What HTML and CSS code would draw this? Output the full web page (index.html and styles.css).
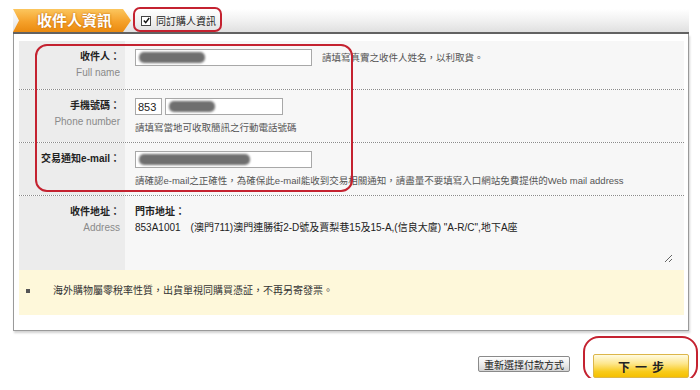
FILE: index.html
```html
<!DOCTYPE html>
<html lang="zh-Hant">
<head>
  <meta charset="UTF-8" />
  <title>收件人資訊</title>
  <link rel="stylesheet" href="styles.css">
</head>
<body>
  <div class="page">
    <div class="tabbar">
      <div class="tab">收件人資訊</div>
      <label class="same">
        <span class="chk"><svg width="7" height="7" viewBox="0 0 7 7"><path d="M0.8 3.6 L2.7 5.6 L6.2 1" fill="none" stroke="#111" stroke-width="1.4"/></svg></span>
        同訂購人資訊
      </label>
    </div>

    <div class="panel">
      <div class="row">
        <div class="lbl"><b>收件人：</b><span class="en">Full name</span></div>
        <div class="val">
          <div class="line">
            <span class="field w-long"><i class="blot" style="width:66px"></i></span>
            <span class="hint side">請填寫真實之收件人姓名，以利取貨。</span>
          </div>
        </div>
      </div>

      <div class="row">
        <div class="lbl"><b>手機號碼：</b><span class="en">Phone number</span></div>
        <div class="val">
          <div class="line">
            <span class="field w-code">853</span>
            <span class="field w-phone"><i class="blot" style="width:46px"></i></span>
          </div>
          <div class="hint">請填寫當地可收取簡訊之行動電話號碼</div>
        </div>
      </div>

      <div class="row">
        <div class="lbl"><b>交易通知e-mail：</b></div>
        <div class="val">
          <div class="line">
            <span class="field w-long"><i class="blot" style="width:111px"></i></span>
          </div>
          <div class="hint">請確認e-mail之正確性，為確保此e-mail能收到交易相關通知，請盡量不要填寫入口網站免費提供的Web mail address</div>
        </div>
      </div>

      <div class="row last">
        <div class="lbl"><b>收件地址：</b><span class="en">Address</span></div>
        <div class="val">
          <b class="store">門市地址：</b>
          <textarea class="addr" readonly>853A1001　(澳門711)澳門連勝街2-D號及賈梨巷15及15-A,(信良大廈) "A-R/C",地下A座</textarea>
        </div>
      </div>

      <div class="note"><span class="dot"></span>海外購物屬零稅率性質，出貨單視同購買憑証，不再另寄發票。</div>
    </div>

    <div class="actions">
      <button class="btn-back">重新選擇付款方式</button>
      <button class="btn-next">下一步</button>
    </div>

    <div class="mark mark-same"></div>
    <div class="mark mark-rows"></div>
    <div class="mark mark-next"></div>
  </div>
</body>
</html>
```

FILE: styles.css
```css
body {
  margin: 0;
  background: #fff;
  font-family: "Liberation Sans", "Noto Sans CJK TC", sans-serif;
  font-size: 10px;
  color: #333;
}
.page {
  position: relative;
  width: 676px;
  padding: 9px 11px 0 13px;
}
.tabbar {
  display: flex;
  align-items: center;
  height: 23px;
  background: linear-gradient(#ffffff, #f1f1f1 50%, #e0e0e0);
  border-bottom: 2px solid #626262;
}
.tab {
  align-self: stretch;
  width: 94px;
  padding-left: 24px;
  line-height: 23px;
  font-size: 15px;
  font-weight: bold;
  color: #fff;
  text-shadow: 0 0 2px #b45a00;
  background: linear-gradient(#fbc65e, #f5a12a 55%, #ea8a10);
  clip-path: polygon(0 0, 110px 0, 118px 50%, 110px 100%, 0 100%, 6px 50%);
}
.same {
  display: flex;
  align-items: center;
  gap: 5px;
  margin-left: 10px;
  color: #222;
}
.chk {
  display: flex;
  align-items: center;
  justify-content: center;
  width: 8px;
  height: 8px;
  border: 1px solid #444;
  background: #fff;
}

.panel {
  width: 665px;
  padding: 7px 4px 15px 5px;
  border: 1px solid #9a9a9a;
  border-top: none;
  box-shadow: 1px 2px 2px rgba(0,0,0,0.18);
  background: #fff;
}
.row {
  display: grid;
  grid-template-columns: 106px 1fr;
  border-bottom: 1px dotted #8a8a8a;
}
.row.last { border-bottom: none; }
.lbl {
  display: flex;
  flex-direction: column;
  align-items: flex-end;
  padding: 8px 5px 8px 0;
  background: #ececec;
  line-height: 16px;
  color: #222;
}
.lbl b { font-weight: bold; }
.lbl .en { color: #8a8a8a; }
.val {
  padding: 8px 0 7px 10px;
  background: #f7f7f7;
}
.line {
  display: flex;
  align-items: center;
  gap: 3px;
}
.field {
  display: flex;
  align-items: center;
  box-sizing: border-box;
  height: 17px;
  padding-left: 3px;
  border: 1px solid #a8a8a8;
  background: #fff;
  color: #222;
}
.w-long { width: 177px; }
.w-code { width: 27px; padding-left: 2px; font-size: 11px; }
.w-phone { width: 118px; }
.blot {
  display: block;
  height: 11px;
  border-radius: 5px;
  background: #6f6f6f;
  filter: blur(0.8px);
}
.hint {
  margin-top: 6px;
  line-height: 14px;
  font-size: 9.5px;
  color: #555;
}
.hint.side { margin: 0 0 0 7px; }
.store {
  display: block;
  line-height: 16px;
  color: #222;
}
.addr {
  display: block;
  box-sizing: border-box;
  width: 538px;
  height: 42px;
  margin: 1px 0 0 0;
  padding: 0;
  border: none;
  background: transparent;
  font-family: inherit;
  font-size: 10px;
  line-height: 14px;
  color: #222;
}
.note {
  display: flex;
  align-items: center;
  padding: 14px 0 17px 7px;
  line-height: 14px;
  background: #fef8da;
  color: #333;
}
.dot {
  width: 4px;
  height: 4px;
  margin-right: 23px;
  background: #555;
}

.actions {
  display: flex;
  justify-content: flex-end;
  align-items: center;
  gap: 23px;
  margin-top: 19px;
}
.btn-back {
  width: 92px;
  height: 16px;
  padding: 0;
  border: 1px solid #8a8a8a;
  border-radius: 2px;
  background: linear-gradient(#ffffff, #ececec 50%, #d3d3d3);
  font-family: inherit;
  font-size: 10px;
  color: #222;
}
.btn-next {
  width: 96px;
  height: 24px;
  margin-top: 4px;
  padding: 0;
  border: 1px solid #dcb64a;
  border-radius: 2px;
  background: linear-gradient(#fffbe2, #fde68a 40%, #f8cb1c 75%, #f5c000);
  font-family: inherit;
  font-size: 12px;
  font-weight: bold;
  letter-spacing: 5px;
  text-indent: 5px;
  color: #222;
}

.mark {
  position: absolute;
  border: 2px solid #c42230;
}
.mark-same { left: 133px; top: 7px; width: 85px; height: 21px; border-radius: 7px; }
.mark-rows { left: 35px; top: 44px; width: 314px; height: 144px; border-radius: 12px; }
.mark-next { left: 583px; top: 336px; width: 111px; height: 42px; border-radius: 16px; }
```
